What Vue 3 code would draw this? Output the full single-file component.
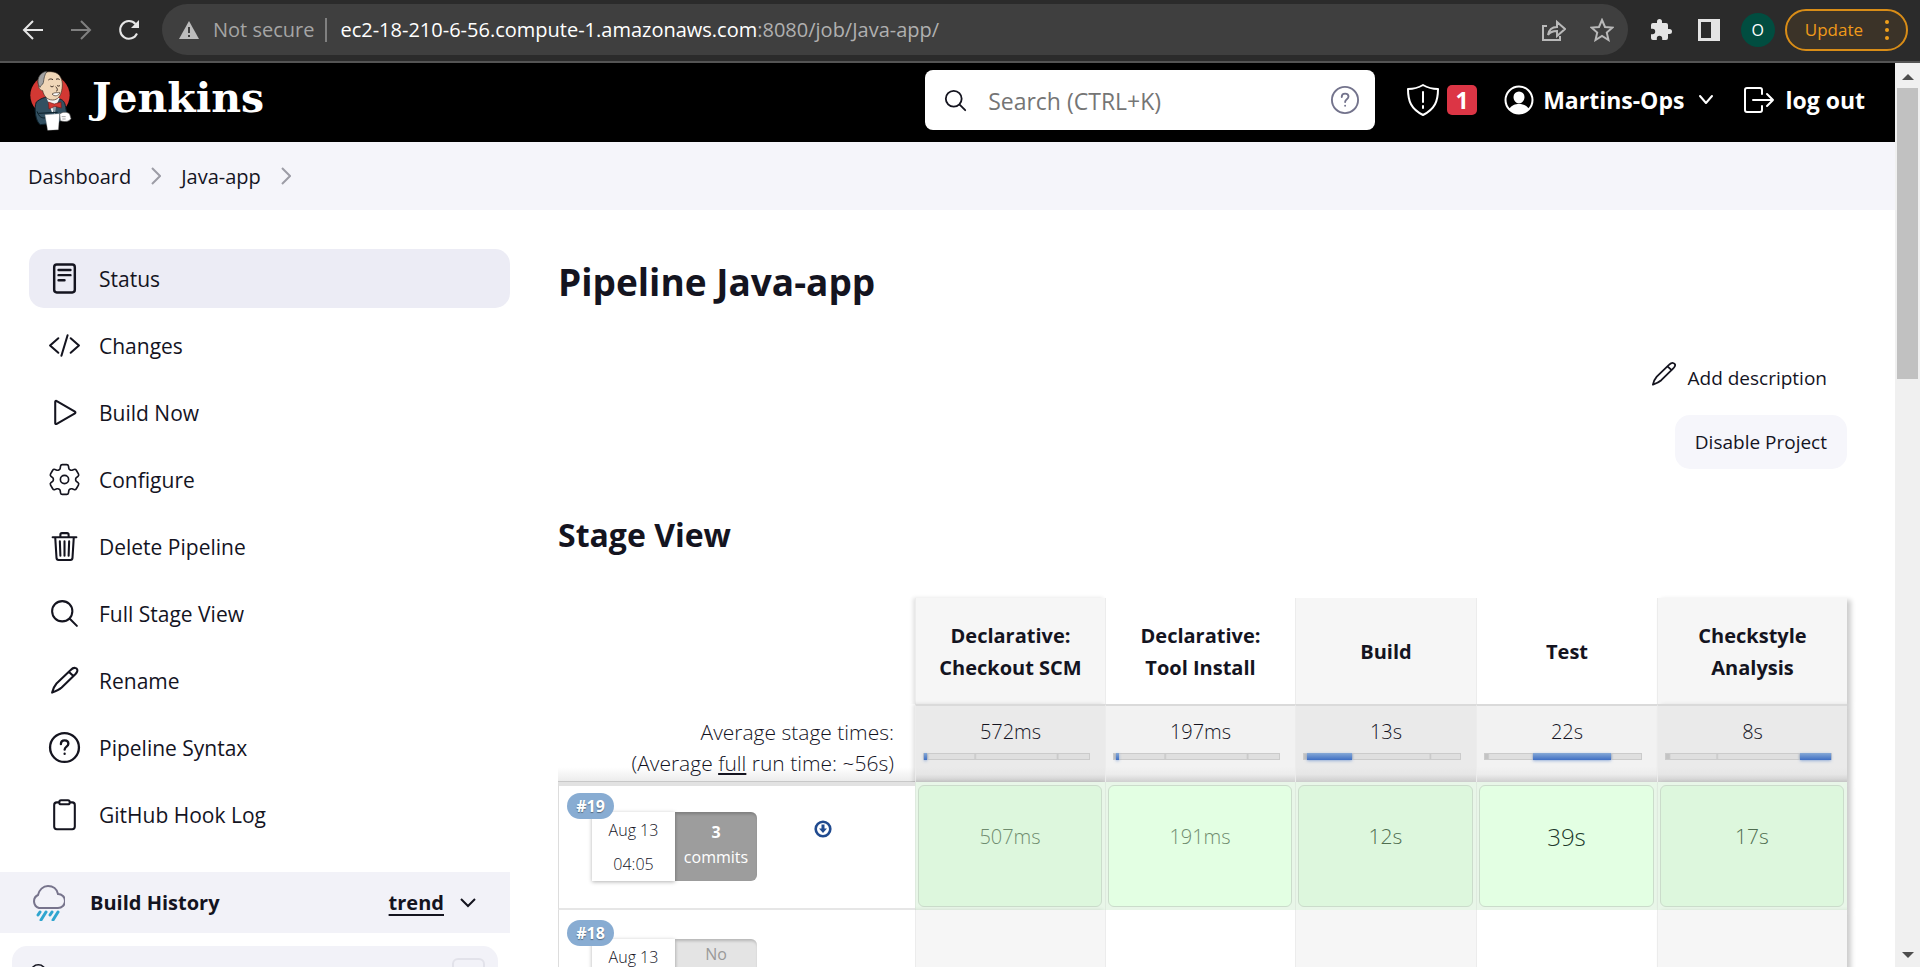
<script setup>
const S = 'M221 64a157 157 0 1 0 157 157A157 157 0 0 0 221 64zM338 338L448 448'
const P = 'M352 92 C372 72 400 56 424 62 C456 68 464 100 448 126 C440 140 432 150 424 158 L212 366 C174 400 120 424 64 444 C78 388 98 340 132 302 Z M322 120 L394 188'

const tasks = [
  { label: 'Status', active: true, d: 'M136 40h240a40 40 0 0 1 40 40v352a40 40 0 0 1-40 40H136a40 40 0 0 1-40-40V80a40 40 0 0 1 40-40zM164 124h184M164 204h184M164 284h92', w: 38 },
  { label: 'Changes', d: 'M160 368L32 256l128-112M352 368l128-112-128-112M304 96l-96 320' },
  { label: 'Build Now', d: 'M112 91v330c0 12 12 18 24 12l282-164c10-6 10-20 0-26L136 79c-12-7-24 0-24 12z' },
  { label: 'Configure', gear: true },
  { label: 'Delete Pipeline', d: 'M112 112l20 320c1 18 14 32 32 32h184c18 0 31-14 32-32l20-320M72 112h368M192 112V72a24 24 0 0 1 24-24h80a24 24 0 0 1 24 24v40M256 176v224M184 176l8 224M328 176l-8 224' },
  { label: 'Full Stage View', d: S },
  { label: 'Rename', d: P },
  { label: 'Pipeline Syntax', d: 'M256 32a224 224 0 1 0 0 448a224 224 0 1 0 0-448zM200 204c0-38 26-58 58-58c34 0 58 20 58 52c0 46-58 44-58 92M258 352v4', w: 36 },
  { label: 'GitHub Hook Log', d: 'M176 68h-40a40 40 0 0 0-40 40v336a40 40 0 0 0 40 40h240a40 40 0 0 0 40-40V108a40 40 0 0 0-40-40h-40M202 36h108a26 26 0 0 1 26 26v10a26 26 0 0 1-26 26H202a26 26 0 0 1-26-26V62a26 26 0 0 1 26-26z' },
]

const stages = [
  { name: ['Declarative:', 'Checkout SCM'], avg: '572ms', from: 0, to: 2, last: '507ms', level: 'low' },
  { name: ['Declarative:', 'Tool Install'], avg: '197ms', from: 1, to: 3, last: '191ms', level: 'low' },
  { name: ['Build'], avg: '13s', from: 2, to: 31, last: '12s', level: 'mid' },
  { name: ['Test'], avg: '22s', from: 31, to: 81, last: '39s', level: 'high' },
  { name: ['Checkstyle', 'Analysis'], avg: '8s', from: 81, to: 100, last: '17s', level: 'mid' },
]

const runs = [
  { id: '#19', date: 'Aug 13', time: '04:05', count: '3', unit: 'commits', log: true, done: true },
  { id: '#18', date: 'Aug 13', time: '03:52', count: 'No', unit: 'Changes', log: false, done: false },
]
</script>

<template>
  <div class="window">
    <div class="toolbar">
      <button class="nav" aria-label="Back"><svg viewBox="0 0 24 24" width="24" height="24"><path d="M22 12H3M12 3L3 12l9 9" /></svg></button>
      <button class="nav dim" aria-label="Forward"><svg viewBox="0 0 24 24" width="24" height="24"><path d="M2 12h19M12 3l9 9-9 9" /></svg></button>
      <button class="nav" aria-label="Reload"><svg viewBox="0 0 24 24" width="24" height="24"><path d="M20 15.500A8.800 8.800 0 1 1 18.500 6" /><path class="solid" d="M22 2v8h-8z" /></svg></button>
      <div class="address">
        <svg viewBox="0 0 20 18" width="20" height="18"><path fill="#bdbdbd" d="M10 0L20 18H0z" /><path stroke="#3f3f3f" stroke-width="2" d="M10 6v6M10 14v2" /></svg>
        <span class="insecure">Not secure</span>
        <span class="url"><b>ec2-18-210-6-56.compute-1.amazonaws.com</b>:8080/job/Java-app/</span>
        <button class="tool share" aria-label="Share"><svg viewBox="0 0 24 24" width="24" height="24"><path d="M5 8H1v14h17v-4M6 17c1-6 4-8 9-8V4l8 7-8 7v-5c-4 0-7 1-9 4z" /></svg></button>
        <button class="tool" aria-label="Bookmark"><svg viewBox="0 0 24 24" width="24" height="24"><path d="M12 2l3 7 7.500.600-5.700 5 1.700 7.400-6.500-4-6.500 4 1.700-7.400-5.700-5L9 9z" /></svg></button>
      </div>
      <button class="ext" aria-label="Extensions"><svg viewBox="0 0 24 24" width="24" height="24"><path fill="#e4e4e4" d="M20.500 11H19V7a2 2 0 0 0-2-2h-4V3.500a2.500 2.500 0 0 0-5 0V5H4a2 2 0 0 0-2 2v3.800h1.500a2.700 2.700 0 0 1 0 5.400H2V20a2 2 0 0 0 2 2h3.800v-1.500a2.700 2.700 0 0 1 5.400 0V22H17a2 2 0 0 0 2-2v-4h1.500a2.500 2.500 0 0 0 0-5z" /></svg></button>
      <button class="ext" aria-label="Side panel"><svg viewBox="0 0 24 24" width="24" height="24"><path fill="#e4e4e4" fill-rule="evenodd" d="M1 1h22v22H1zM4 4v16h10V4z" /></svg></button>
      <button class="avatar">O</button>
      <button class="update">Update <i></i></button>
    </div>

    <div class="viewport">
      <div class="page">
        <header class="header">
          <a class="brand" href="#">
            <svg viewBox="26 26 129 180" width="43" height="60">
              <ellipse cx="89" cy="102" rx="59" ry="60" fill="#d33833" />
              <path d="M48 122c12-10 26-16 40-14l26 4c14 2 20 10 22 26l4 24-26 22-54 6c-14-8-20-50-12-68z" fill="#335061" stroke="#0b1f29" stroke-width="3" />
              <path d="M78 108l18 48 22-46z" fill="#f2f2f2" />
              <path d="M94 132l14 0-5 30z" fill="#8d9aa5" />
              <path d="M58 44c10-14 40-18 55-6 14 12 15 32 11 50-3 16-12 28-27 28-18 0-27-14-30-28-9-2-14-10-12-18-4-8-3-18 3-26z" fill="#f0d6b7" stroke="#3a2a20" stroke-width="2" />
              <path d="M60 40c8-8 14-10 20-10-8 10-9 22-11 34-2 8-8 6-10 14-8-8-8-28 1-38z" fill="#a2a2a2" stroke="#333" stroke-width="2" />
              <path d="M84 56c5-4 9-4 14-1M107 54c4-2 8-2 11 1M90 74c3 3 7 3 10 0M110 72c3 3 6 3 9 0M106 76c6 6 7 12 1 14" fill="none" stroke="#3a2a20" stroke-width="3" />
              <path d="M95 98c8-6 17-3 24-4-4 10-17 13-24 4z" fill="#fff" stroke="#3a2a20" stroke-width="2" />
              <path d="M84 122l18 6 20-6 1 18-20-5-17 8z" fill="#d33833" stroke="#731a18" stroke-width="2" />
              <path d="M74 160l44-3-4 48-32 2z" fill="#fff" stroke="#999" stroke-width="1" />
              <path d="M118 158c10-8 24-6 30 0l4 14c-6 10-22 10-32 6z" fill="#fff" stroke="#555" stroke-width="2" />
              <path d="M124 166h12M126 173h10" stroke="#777" stroke-width="2" />
              <path d="M50 150c6 16 12 20 24 20M54 156l58-3" fill="none" stroke="#0b1f29" stroke-width="3" />
            </svg>
            <span>Jenkins</span>
          </a>
          <label class="search">
            <svg class="ico" viewBox="48 48 416 416" width="21" height="21"><path :d="S" /></svg>
            <input type="text" placeholder="Search (CTRL+K)" aria-label="Search" />
            <svg class="ico help" viewBox="16 16 480 480" width="28" height="28"><path :d="tasks[7].d" /></svg>
          </label>
          <a class="alert" href="#" aria-label="Security warnings">
            <svg viewBox="0 0 32 32" width="32" height="32"><path d="M16 1c5 3 9 4 15 4 0 12-3 20-15 26C4 25 1 17 1 5c6 0 10-1 15-4zM16 8v10M16 22v2" /></svg>
            <span>1</span>
          </a>
          <a class="user" href="#">
            <svg viewBox="0 0 30 30" width="30" height="30"><circle cx="15" cy="15" r="13.500" /><path class="fill" d="M15 6.500a5.500 5.500 0 0 1 5.500 5.500c0 3.500-2.500 6.500-5.500 6.500S9.500 15.500 9.500 12A5.500 5.500 0 0 1 15 6.500zM5 24c3-4 6-5 10-5s7 1 10 5c-3 3-6 5-10 5s-7-2-10-5z" /></svg>
            Martins-Ops
            <svg class="caret" viewBox="0 0 16 12" width="16" height="12"><path d="M2 2l6 7 6-7" /></svg>
          </a>
          <a class="logout" href="#">
            <svg viewBox="0 0 30 28" width="30" height="28"><path d="M18 8V4a2 2 0 0 0-2-2H3a2 2 0 0 0-2 2v20a2 2 0 0 0 2 2h13a2 2 0 0 0 2-2v-4M9 14h20M23 8l6 6-6 6" /></svg>
            log out
          </a>
        </header>

        <nav class="crumbs" aria-label="Breadcrumb">
          <template v-for="c in ['Dashboard', 'Java-app']" :key="c">
            <a href="#">{{ c }}</a>
            <svg viewBox="0 0 10 18" width="10" height="18"><path d="M1 1l8 8-8 8" /></svg>
          </template>
        </nav>

        <div class="body">
          <aside class="side">
            <nav class="tasks" aria-label="Tasks">
              <a v-for="t in tasks" :key="t.label" href="#" :class="{ active: t.active }">
                <svg v-if="t.gear" class="ico gear" viewBox="2 2 20 20" width="33" height="33">
                  <path d="M9.594 3.940c.090-.542.560-.940 1.110-.940h2.593c.550 0 1.020.398 1.110.940l.213 1.281c.063.374.313.686.645.870.074.040.147.083.220.127.325.196.720.257 1.075.124l1.217-.456a1.125 1.125 0 0 1 1.370.490l1.296 2.247a1.125 1.125 0 0 1-.260 1.431l-1.003.827c-.293.241-.438.613-.430.992a7.723 7.723 0 0 1 0 .255c-.008.378.137.750.430.991l1.004.827c.424.350.534.955.260 1.430l-1.298 2.247a1.125 1.125 0 0 1-1.369.491l-1.217-.456c-.355-.133-.750-.072-1.076.124a6.470 6.470 0 0 1-.220.128c-.331.183-.581.495-.644.869l-.213 1.281c-.090.543-.560.940-1.110.940h-2.594c-.550 0-1.019-.398-1.110-.940l-.213-1.281c-.062-.374-.312-.686-.644-.870a6.520 6.520 0 0 1-.220-.127c-.325-.196-.720-.257-1.076-.124l-1.217.456a1.125 1.125 0 0 1-1.369-.490l-1.297-2.247a1.125 1.125 0 0 1 .260-1.431l1.004-.827c.292-.240.437-.613.430-.991a6.932 6.932 0 0 1 0-.255c.007-.380-.138-.751-.430-.992l-1.004-.827a1.125 1.125 0 0 1-.260-1.430l1.297-2.247a1.125 1.125 0 0 1 1.370-.491l1.216.456c.356.133.751.072 1.076-.124.072-.044.146-.086.220-.128.332-.183.582-.495.644-.869z" />
                  <circle cx="12" cy="12" r="2.500" />
                </svg>
                <svg v-else class="ico" viewBox="0 0 512 512" width="33" height="33"><path :d="t.d" :stroke-width="t.w || 32" /></svg>
                {{ t.label }}
              </a>
            </nav>
            <section class="history">
              <div class="history-head">
                <svg viewBox="0 0 34 36" width="34" height="36">
                  <path d="M8 23a7 7 0 0 1-1-13c1-5 5-9 10-9s9 3 10 8a7 7 0 0 1 0 14z" fill="none" stroke="#77748c" stroke-width="2" />
                  <path d="M9 27l-2 3M15 27l-5 8M21 27l-2 3M27 27l-5 8" stroke="#30a5cf" stroke-width="3" stroke-linecap="round" />
                </svg>
                <h2>Build History</h2>
                <a href="#">trend</a>
                <svg class="caret" viewBox="0 0 16 12" width="16" height="12"><path d="M1 2l7 7 7-7" /></svg>
              </div>
              <label class="filter">
                <svg class="ico" viewBox="48 48 416 416" width="20" height="20"><path :d="S" /></svg>
                <input type="text" aria-label="Filter builds" />
                <kbd>/</kbd>
              </label>
            </section>
          </aside>

          <main class="main">
            <h1>Pipeline Java-app</h1>
            <div class="actions">
              <a class="describe" href="#"><svg class="ico" viewBox="48 44 424 424" width="24" height="24"><path :d="P" /></svg>Add description</a>
              <button class="disable">Disable Project</button>
            </div>
            <h2 class="stage-title">Stage View</h2>
            <table class="stages">
              <colgroup><col class="c-run" /><col class="c-wide" /><col class="c-wide" /><col class="c-slim" /><col class="c-slim" /><col class="c-wide" /></colgroup>
              <thead>
                <tr>
                  <td></td>
                  <th v-for="(s, i) in stages" :key="i" scope="col"><template v-for="(l, n) in s.name" :key="n"><br v-if="n" />{{ l }}</template></th>
                </tr>
                <tr class="averages">
                  <td>Average stage times:<br />(Average <u>full</u> run time: ~56s)</td>
                  <td v-for="(s, i) in stages" :key="i">
                    {{ s.avg }}
                    <div class="bar"><i :style="{ left: s.from + '%', width: s.to - s.from + '%' }"></i></div>
                  </td>
                </tr>
              </thead>
              <tbody>
                <tr v-for="r in runs" :key="r.id" :class="{ done: r.done }">
                  <td class="run">
                    <span class="badge">{{ r.id }}</span>
                    <div class="card">
                      <div class="when"><span>{{ r.date }}</span><span>{{ r.time }}</span></div>
                      <div class="commits" :class="{ none: !r.done }"><strong>{{ r.count }}</strong><span>{{ r.unit }}</span></div>
                      <svg v-if="r.log" viewBox="0 0 18 18" width="18" height="18"><circle cx="9" cy="9" r="7.300" fill="none" stroke="#204a8f" stroke-width="2.600" /><path d="M7.500 4.500h3v4H13l-4 4.500-4-4.500h2.500z" fill="#204a8f" /></svg>
                    </div>
                  </td>
                  <td v-for="(s, i) in stages" :key="i" class="stage"><div v-if="r.done" class="ok" :class="s.level">{{ s.last }}</div></td>
                </tr>
              </tbody>
            </table>
          </main>
        </div>
      </div>
      <div class="scrollbar" aria-hidden="true">
        <svg viewBox="0 0 12 6" width="12" height="6"><path d="M0 6l6-6 6 6z" /></svg>
        <span class="track"><span class="thumb"></span></span>
        <svg viewBox="0 0 12 6" width="12" height="6"><path d="M0 0l6 6 6-6z" /></svg>
      </div>
    </div>
  </div>
</template>

<style>
body { margin: 0; background: #fff; }
</style>

<style scoped>
* { box-sizing: border-box; }
.window { display: flex; flex-direction: column; height: 100vh; overflow: hidden; font-family: "Open Sans", "Noto Sans", sans-serif; color: #14141f; }
button { border: 0; padding: 0; background: none; font: inherit; color: inherit; cursor: pointer; }
a { color: inherit; text-decoration: none; }
svg { flex: none; display: block; }
.ico { fill: none; stroke: #14141f; stroke-width: 32; stroke-linecap: round; stroke-linejoin: round; }
.gear { stroke-width: 1; }

.toolbar { flex: none; display: flex; align-items: center; height: 63px; padding: 0 12px 2px 21px; background: #2b2b2b; border-bottom: 2px solid #545454; }
.nav { margin-right: 24px; }
.nav svg { fill: none; stroke: #e6e6e6; stroke-width: 2; }
.nav .solid { fill: #e6e6e6; stroke: none; }
.nav.dim svg { stroke: #808080; }
.nav:nth-child(3) { margin-right: 21px; }
.address { flex: 1; display: flex; align-items: center; height: 51px; padding: 0 14px 0 17px; border-radius: 26px; background: #3f3f3f; font-size: 20px; color: #b0b0b0; }
.insecure { margin: 0 11px 0 14px; color: #a5a5a5; }
.url { flex: 1; border-left: 2px solid #808080; padding-left: 13px; line-height: 24px; }
.url b { font-weight: 400; color: #fff; }
.tool svg { fill: none; stroke: #b9b9b9; stroke-width: 2; }
.share { margin-right: 24px; }
.ext { margin-left: 21px; }
.ext + .ext { margin-left: 24px; }
.avatar { width: 34px; height: 34px; margin: 0 10px 0 20px; border-radius: 50%; background: #014d40; color: #fff; font-size: 16px; }
.update { display: flex; align-items: center; height: 42px; padding: 0 17px 0 18px; gap: 22px; border: 2px solid #d98d17; border-radius: 21px; background: #3b3328; color: #f09a1a; font-size: 17px; }
.update i { width: 4px; height: 4px; border-radius: 50%; background: #f0a01a; box-shadow: 0 -8px #f0a01a, 0 8px #f0a01a; }

.viewport { flex: 1; min-height: 0; display: flex; }
.page { flex: 1; min-width: 0; overflow: hidden; }
.scrollbar { flex: none; display: flex; flex-direction: column; align-items: center; width: 25px; padding: 11px 0 9px; background: #f0f0f0; fill: #4d4d4d; }
.track { flex: 1; width: 21px; padding: 8px 0; }
.thumb { display: block; height: 34%; background: #c1c1c1; }

.header { display: flex; align-items: center; padding: 7px 30px 12px 29px; background: #000; color: #fff; font-size: 23px; font-weight: 700; }
.brand { display: flex; align-items: center; gap: 20px; margin-right: auto; font: 700 41px "DejaVu Serif", serif; }
.brand span { padding-bottom: 4px; }
.search { display: flex; align-items: center; width: 450px; height: 60px; padding: 0 16px 0 20px; border-radius: 8px; background: #fff; }
.search .ico:first-child { stroke-width: 36; }
.search input { flex: 1; min-width: 0; padding: 2px 0 0 22px; border: 0; outline: 0; background: none; font: 400 23px "Open Sans", sans-serif; }
.search input::placeholder { color: #757575; opacity: 1; }
.search .help { stroke: #73738c; }
.header svg { overflow: visible; }
.alert, .user, .logout { display: flex; align-items: center; }
.alert svg, .user svg, .logout svg { fill: none; stroke: #fff; stroke-width: 2; stroke-linejoin: round; stroke-linecap: round; }
.alert { margin-left: 32px; gap: 8px; }
.alert span { width: 30px; height: 30px; border-radius: 5px; background: #dc3545; text-align: center; line-height: 30px; }
.user { margin-left: 27px; gap: 9px; }
.user .fill { fill: #fff; stroke: none; }
.user .caret { margin-left: 5px; }
.logout { margin-left: 30px; gap: 11px; }

.crumbs { display: flex; align-items: center; gap: 20px; height: 68px; padding: 0 28px; background: #f5f5fa; font-size: 20px; }
.crumbs svg { fill: none; stroke: #9d9da6; stroke-width: 2; }

.body { display: flex; }
.side { flex: none; width: 510px; padding-top: 39px; }
.tasks { display: flex; flex-direction: column; gap: 8px; padding-left: 29px; }
.tasks a { display: flex; align-items: center; gap: 18px; height: 59px; padding-left: 19px; border-radius: 15px; font-size: 21px; }
.tasks .active { background: #ececf5; }
.history { margin-top: 28px; }
.history-head { display: flex; align-items: center; height: 61px; padding: 0 34px 0 31px; background: #f2f2f8; font-size: 20px; font-weight: 700; }
.history-head h2 { flex: 1; margin: 0 0 0 25px; font-size: 20px; }
.history-head a { text-decoration: underline; text-underline-offset: 4px; text-decoration-thickness: 2px; }
.history-head .caret { margin-left: 16px; fill: none; stroke: #14141f; stroke-width: 2; }
.filter { display: flex; align-items: center; height: 56px; margin: 13px 12px 0; padding: 0 13px 0 18px; border-radius: 15px; background: #f2f2f8; }
.filter input { flex: 1; border: 0; outline: 0; background: none; font-size: 19px; }
.filter kbd { width: 33px; height: 32px; border: 2px solid #e2e2ea; border-radius: 6px; text-align: center; font: 15px/28px "Open Sans", sans-serif; }

.main { flex: 1; min-width: 0; padding: 47px 48px 0; }
h1 { margin: 0; font-size: 37px; line-height: 50px; }
.actions { display: flex; flex-direction: column; align-items: flex-end; gap: 10px; margin: 44px 0; font-size: 19px; }
.describe, .disable { display: flex; align-items: center; height: 54px; padding: 0 20px; border-radius: 15px; }
.describe { gap: 12px; }
.describe svg { margin-bottom: 8px; }
.disable { background: #f6f6fb; }
.stage-title { margin: 0 0 41px; font-size: 32px; line-height: 44px; }

.stages { width: 100%; table-layout: fixed; border-collapse: separate; border-spacing: 0; font-size: 20px; text-align: center; }
.c-run { width: 357px; }
.c-wide { width: 190px; }
.c-slim { width: 181px; }
.stages th, .stages td { padding: 0; }
.stages th { height: 106px; padding-top: 2px; font-weight: 700; line-height: 32px; }
.stages tr > :nth-child(even) { background: #f6f6f6; }
.stages tr > :nth-child(odd) { background: #fff; }
.stages tr > :nth-child(n + 2) { border-left: 1px solid #ececec; }
.stages tr > :nth-child(2) { box-shadow: -2px 0 4px rgba(0, 0, 0, 0.12); }
.stages tr > :last-child { box-shadow: 4px 2px 5px rgba(0, 0, 0, 0.2); }
.averages td { height: 78px; font-weight: 300; line-height: 27px; vertical-align: top; }
.averages td:first-child { padding: 13px 21px 0 0; border-bottom: 1px solid #c8c8c8; font-size: 21px; text-align: right; line-height: 31px; background: linear-gradient(#fff 82%, #ececec); }
.averages td + td { padding-top: 12px; border-top: 2px solid #dadada; border-left-color: #f6f6f6; }
.averages td:nth-child(even) { background: linear-gradient(#eaeaea 80%, #e6e6e6 90%, #cccccc); }
.averages td:nth-child(odd):not(:first-child) { background: linear-gradient(#f2f2f2 80%, #ececec 90%, #d0d0d0); }
.bar { position: relative; height: 7px; margin: 8px 15px 0 7px; border: 1px solid #cbcbcb; background: linear-gradient(90deg, #c4c4c4 2%, #dfdfdf 3%, #dfdfdf 30%, #c8c8c8 31%, #dfdfdf 32%, #dfdfdf 80%, #c8c8c8 81%, #dfdfdf 82%); }
.bar i { position: absolute; top: -1px; height: 7px; background: linear-gradient(#86a9d6, #3f6fc4); box-shadow: 0 1px 3px rgba(70, 120, 200, 0.5); }

.stages .run { position: relative; height: 128px; border-left: 1px solid #ddd; border-bottom: 2px solid #e6e6e6; vertical-align: top; }
.done .run { border-top: 4px solid #e2e2e2; }
.card { display: flex; padding: 29px 0 0 33px; }
.done .card { padding-top: 26px; }
.badge { position: absolute; top: 10px; left: 8px; width: 47px; height: 26px; border-radius: 13px; background: #88acd2; color: #fff; font-size: 16px; font-weight: 700; line-height: 26px; text-shadow: 0 1px 1px rgba(0, 0, 0, 0.4); }
.done .badge { top: 7px; }
.when, .commits { display: flex; flex-direction: column; height: 69px; font-size: 16px; }
.when { width: 83px; padding-top: 1px; background: #fff; box-shadow: 0 1px 4px rgba(0, 0, 0, 0.3); font-weight: 300; line-height: 34px; }
.commits { width: 82px; padding-top: 8px; border-radius: 0 6px 6px 0; background: #9d9d9d; color: #fff; line-height: 25px; box-shadow: inset 1px 2px 3px rgba(0, 0, 0, 0.2); }
.commits.none { padding-top: 3px; background: #e4e4e4; color: #999; }
.commits.none strong { font-weight: 400; }
.card svg { margin: 8px 0 0 57px; }

.stages .done .stage { padding: 3px 3px 3px 2px; background: #e8f6e8; border-left-color: #dfeadf; }
.ok { display: flex; align-items: center; justify-content: center; height: 122px; padding-bottom: 20px; border: 1px solid #cbdccb; border-radius: 6px; background: #ddf7dd; font-weight: 300; }
.stage:nth-child(odd) .ok { background: #e3ffe3; }
.low { color: #6f8c6f; }
.mid { color: #4f6d4f; font-size: 21px; }
.high { color: #20382a; font-size: 24px; }
</style>
